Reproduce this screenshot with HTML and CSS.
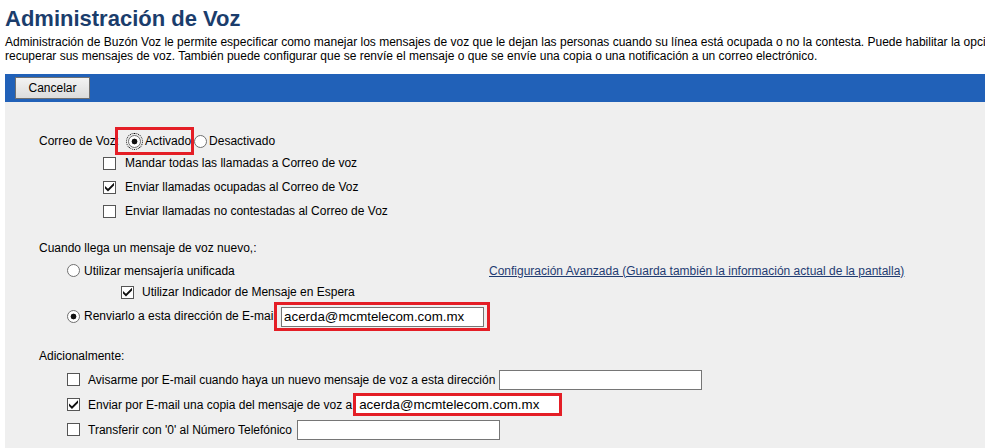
FILE: index.html
```html
<!DOCTYPE html>
<html lang="es">
<head>
    <meta charset="UTF-8">
    <title>Administración de Voz</title>
    <link rel="stylesheet" href="styles.css">
</head>
<body>
    <div class="page">
        <h1 class="title">Administración de Voz</h1>
        <p class="intro">
            <span class="line">Administración de Buzón Voz le permite especificar como manejar los mensajes de voz que le dejan las personas cuando su línea está ocupada o no la contesta. Puede habilitar la opción de mensajería unificada para</span>
            <span class="line">recuperar sus mensajes de voz. También puede configurar que se renvíe el mensaje o que se envíe una copia o una notificación a un correo electrónico.</span>
        </p>

        <div class="toolbar">
            <button class="btn" type="button">Cancelar</button>
        </div>

        <div class="panel">
            <!-- Correo de voz -->
            <div class="group">
                <div class="row first">
                    <span class="caption">Correo de Voz:</span>
                    <span class="mark mark-opt">
                        <label class="opt"><input type="radio" name="vm" class="focused" checked>Activado</label>
                    </span>
                    <label class="opt opt-tight"><input type="radio" name="vm">Desactivado</label>
                </div>
                <div class="row sub-1"><label class="opt chk"><input type="checkbox">Mandar todas las llamadas a Correo de voz</label></div>
                <div class="row sub-1"><label class="opt chk"><input type="checkbox" checked>Enviar llamadas ocupadas al Correo de Voz</label></div>
                <div class="row sub-1"><label class="opt chk"><input type="checkbox">Enviar llamadas no contestadas al Correo de Voz</label></div>
            </div>

            <!-- Mensaje nuevo -->
            <div class="group group-2">
                <div class="row head">Cuando llega un mensaje de voz nuevo,:</div>
                <div class="row r-um">
                    <label class="opt rad unified"><input type="radio" name="nuevo">Utilizar mensajería unificada</label>
                    <a href="#" class="link">Configuración Avanzada (Guarda también la información actual de la pantalla)</a>
                </div>
                <div class="row r-mwi sub-2"><label class="opt chk"><input type="checkbox" checked>Utilizar Indicador de Mensaje en Espera</label></div>
                <div class="row r-fwd">
                    <label class="opt rad"><input type="radio" name="nuevo" checked>Renviarlo a esta dirección de E-mail</label>
                    <span class="mark mark-field"><input type="text" class="field" value="acerda@mcmtelecom.com.mx"></span>
                </div>
            </div>

            <!-- Adicionalmente -->
            <div class="group group-3">
                <div class="row head">Adicionalmente:</div>
                <div class="row r-add">
                    <label class="opt chk"><input type="checkbox">Avisarme por E-mail cuando haya un nuevo mensaje de voz a esta dirección</label>
                    <input type="text" class="field">
                </div>
                <div class="row r-add">
                    <label class="opt chk"><input type="checkbox" checked>Enviar por E-mail una copia del mensaje de voz a</label>
                    <input type="text" class="field field-marked" value="acerda@mcmtelecom.com.mx">
                </div>
                <div class="row r-add">
                    <label class="opt chk"><input type="checkbox">Transferir con '0' al Número Telefónico</label>
                    <input type="text" class="field field-gap">
                </div>
            </div>
        </div>
    </div>
</body>
</html>
```

FILE: styles.css
```css
html, body {
    margin: 0;
    overflow: hidden;
}
body {
    font-family: "Liberation Sans", Arial, sans-serif;
    font-size: 12px;
    color: #000;
    background-color: #ffffff;
}
.page {
    width: 1150px;
    padding-left: 5px;
}
.title {
    margin: 6px 0 0;
    font-size: 22px;
    font-weight: bold;
    line-height: 25px;
    color: #1b3d6c;
}
.intro {
    margin: 4px 0 11px;
    line-height: 14px;
}
.intro .line {
    display: block;
    white-space: nowrap;
}
.toolbar {
    height: 28px;
    box-sizing: border-box;
    padding: 3px 10px;
    background-color: #2161b8;
}
.btn {
    width: 75px;
    height: 22px;
    padding: 0;
    font-family: inherit;
    font-size: 12px;
    color: #000;
    background: linear-gradient(#f3f3f3, #dcdcdc);
    border: 1px solid #707070;
    border-radius: 0;
}
.panel {
    background-color: #efefef;
    padding: 28px 0 40px 34px;
    min-height: 400px;
}

/* radios and checkboxes, old windows look */
input[type="radio"],
input[type="checkbox"] {
    appearance: none;
    -webkit-appearance: none;
    width: 13px;
    height: 13px;
    margin: 0;
    box-sizing: border-box;
    border: 1px solid #555;
    background-color: #fff;
    display: inline-grid;
    place-content: center;
    flex: none;
}
input[type="radio"] {
    border-radius: 50%;
    border-color: #707070;
}
input[type="radio"]:checked {
    background: radial-gradient(circle, #111 0 2.6px, #fff 3.2px);
}
input[type="checkbox"]::before {
    content: "";
    width: 9px;
    height: 9px;
    background-color: #111;
    clip-path: polygon(0 39%, 33% 70%, 100% 4%, 100% 32%, 33% 100%, 0 66%);
    transform: scale(0);
}
input[type="checkbox"]:checked::before {
    transform: scale(1);
}
.focused {
    outline: 1px dotted #000;
    outline-offset: 1px;
}

.row {
    display: flex;
    align-items: center;
    height: 24px;
    white-space: nowrap;
}
.row.first { height: 22px; margin-bottom: -1px; }
.sub-1 { padding-left: 64px; }
.sub-2 { padding-left: 82px; }

.opt {
    display: inline-flex;
    align-items: center;
}
.opt.chk input { margin-right: 9px; }
.opt.rad input { margin-right: 4px; }
.rad { margin-left: 28px; }
.group-3 .chk { margin-left: 28px; }
.group-3 .opt.chk input { margin-right: 8px; }
.sub-2 .opt.chk input { margin-right: 8px; }

/* red annotation boxes */
.mark {
    display: inline-flex;
    align-items: center;
    border: 3px solid #e41e26;
}
.mark-opt {
    height: 22px;
    margin-left: -4px;
    padding: 0 0 0 10px;
}
.mark-opt .opt input { margin-right: 4px; }
.opt-tight input[type="radio"] { margin-right: 2px; }
.mark-field {
    padding: 2px 3px 1px 4px;
    margin-left: -2px;
}

.field {
    width: 203px;
    height: 20px;
    box-sizing: border-box;
    margin: 0 0 0 4px;
    padding: 0 2px;
    font-family: inherit;
    font-size: 13.33px;
    color: #000;
    background-color: #fff;
    border: 1px solid #767676;
}
.mark-field .field { margin: 0; }
.field-marked {
    width: 209px;
    height: 23px;
    margin-left: 1px;
    padding-left: 3px;
    border: 3px solid #e41e26;
}
.field-gap { margin-left: 5px; }

.link {
    color: #1f3c72;
    text-decoration: underline;
}
.unified {
    width: 422px;
}

.group-2 { margin-top: 14px; }
.group-2 .head { height: 22px; }
.r-um { height: 23px; }
.r-mwi { height: 20px; }
.r-fwd { height: 28px; }
.group-3 { margin-top: 14px; }
.group-3 .head { height: 23px; }
.r-add { height: 25px; }
```
